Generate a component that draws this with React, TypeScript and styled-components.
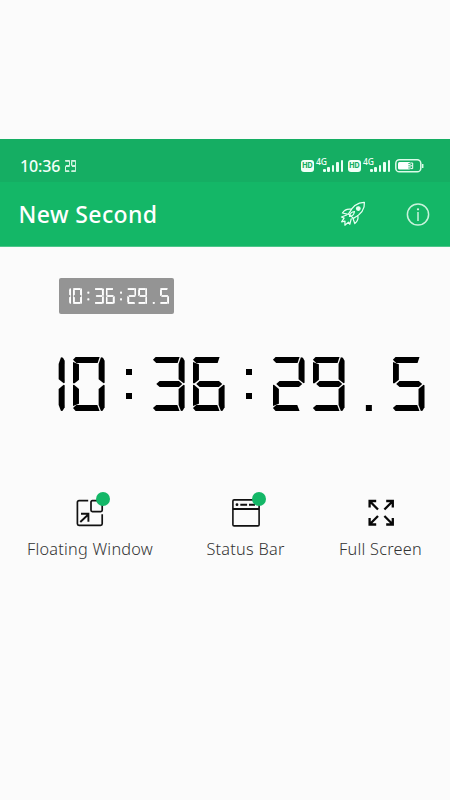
import React from "react";
import styled, { createGlobalStyle } from "styled-components";

const GlobalStyle = createGlobalStyle`
  * { box-sizing: border-box; }
  body { margin: 0; background: #fbfbfb; font-family: "Noto Sans", sans-serif; }
`;

const Page = styled.main`
  width: 450px;
  height: 800px;
  padding-top: 139px;
  background: #fbfbfb;
  overflow: hidden;
`;

const StatusBar = styled.div`
  height: 43px;
  padding: 10px 26px 0 20px;
  display: flex;
  justify-content: space-between;
  background: #15ae63;
  color: #f4fff9;
`;

const StatusGroup = styled.div<{ $gap: number }>`
  display: flex;
  align-items: center;
  gap: ${(p) => p.$gap}px;
  height: 34px;
`;

const Time = styled.span`
  width: 41px;
  font-size: 16px;
  font-weight: 500;
  line-height: 34px;
  letter-spacing: -0.15px;
  white-space: nowrap;
`;

const HdBadge = styled.span`
  width: 13px;
  height: 12px;
  border-radius: 3px;
  background: #f0fff7;
  color: #15ae63;
  font: 800 7px/12px Inter, sans-serif;
  text-align: center;
`;

const Signal = styled.div`
  display: flex;
  align-items: flex-start;
  width: 27px;
  height: 16px;
  margin: -2px 5px 0 2px;
`;

const Network = styled.span`
  width: 7px;
  font: 500 8.5px/9px "Noto Sans", sans-serif;
  white-space: nowrap;
`;

const Bars = styled.div`
  display: flex;
  align-items: flex-end;
  gap: 1.8px;
  height: 15px;
`;

const Bar = styled.i<{ $height: number }>`
  width: 2.6px;
  height: ${(p) => p.$height}px;
  border-radius: 1px;
  background: #e9fff3;
`;

const AppBar = styled.header`
  height: 65px;
  padding: 0 20px 0 18.5px;
  display: flex;
  align-items: center;
  background: #14b767;
  border-bottom: 1px solid #4cc68a;
  color: #fff;
`;

const Title = styled.h1`
  flex: 1;
  margin: 0;
  font-size: 23px;
  font-weight: 500;
  line-height: 32px;
  letter-spacing: 0.4px;
`;

const Actions = styled.div`
  display: flex;
  gap: 40px;
`;

const Preview = styled.section`
  width: 115px;
  height: 36px;
  margin: 31px 0 0 58.5px;
  display: flex;
  align-items: center;
  justify-content: flex-end;
  padding-right: 4.5px;
  border-radius: 2px;
  background: #949494;
`;

const Clock = styled.section`
  height: 54px;
  margin: 43px 0 0 33px;
`;

const Display = styled.div<{ $gap: number; $glow: number }>`
  display: flex;
  gap: ${(p) => p.$gap}px;
  filter: ${(p) => (p.$glow ? `drop-shadow(0 0 ${p.$glow}px rgba(255, 255, 255, 0.9))` : "none")};
`;

const Cell = styled.span<{ $width: number; $height: number; $color: string }>`
  display: grid;
  flex: none;
  width: ${(p) => p.$width}px;
  height: ${(p) => p.$height}px;
  color: ${(p) => p.$color};
`;

const Segment = styled.i<{ $shape: string }>`
  grid-area: 1 / 1;
  background: currentColor;
  clip-path: polygon(${(p) => p.$shape});
`;

/* Segment corners on a 95 x 162 cell. */
const segmentCorners: Record<string, number[][]> = {
  a: [[0, 8], [8, 0], [80, 0], [74, 18], [10, 18]],
  b: [[84, 1], [90, 2], [95, 11], [95, 77], [92, 79], [77, 67], [77, 21]],
  c: [[92, 83], [95, 85], [95, 151], [89, 161], [84, 162], [77, 144], [77, 96]],
  d: [[0, 153], [10, 144], [73, 144], [80, 162], [8, 162]],
  e: [[0, 84], [3, 83], [18, 96], [18, 140], [0, 147]],
  f: [[0, 15], [18, 22], [18, 68], [5, 79], [0, 79]],
  g: [[10, 81], [20, 72], [78, 72], [88, 81], [78, 90], [20, 90]],
  t: [[39, 36], [57, 36], [57, 54], [39, 54]],
  m: [[39, 108], [57, 108], [57, 126], [39, 126]],
  p: [[39, 144], [57, 144], [57, 162], [39, 162]],
};

const toPolygon = (corners: number[][]) =>
  corners.map(([x, y]) => `${(x / 95) * 100}% ${(y / 162) * 100}%`).join(", ");

const lit: Record<string, string> = {
  "0": "abcdef", "1": "bc", "2": "abged", "3": "abgcd", "4": "fgbc",
  "5": "afgcd", "6": "afgecd", "7": "abc", "8": "abcdefg", "9": "abfgcd",
  ":": "tm", ".": "p",
};

type SegmentDisplayProps = {
  value: string;
  width: number;
  height: number;
  gap: number;
  color: string;
  glow?: number;
};

function SegmentDisplay({ value, width, height, gap, color, glow = 0 }: SegmentDisplayProps) {
  return (
    <Display role="img" aria-label={value} $gap={gap} $glow={glow}>
      {[...value].map((char, i) => (
        <Cell key={i} $width={width} $height={height} $color={color}>
          {[...lit[char]].map((name) => (
            <Segment key={name} $shape={toPolygon(segmentCorners[name])} />
          ))}
        </Cell>
      ))}
    </Display>
  );
}

const Modes = styled.nav`
  display: flex;
  gap: 54px;
  margin: 81px 0 0 27px;
`;

const Mode = styled.div<{ $width: number }>`
  width: ${(p) => p.$width}px;
  display: flex;
  flex-direction: column;
  align-items: center;
`;

const ModeIcon = styled.div`
  position: relative;
  width: 28px;
  height: 36px;
  padding-top: 7px;
  svg { display: block; }
`;

const ActiveDot = styled.i`
  position: absolute;
  top: 0;
  left: 20px;
  width: 14px;
  height: 14px;
  border-radius: 50%;
  background: #14b767;
`;

const ModeLabel = styled.span`
  margin-top: 9px;
  font-size: 16.3px;
  font-weight: 300;
  line-height: 24px;
  letter-spacing: 0.24px;
  color: #333;
  white-space: nowrap;
`;

const SignalMeter = () => (
  <Signal>
    <Network>4G</Network>
    <Bars>
      {[3, 5, 7.5, 10, 12.5].map((h) => <Bar key={h} $height={h} />)}
    </Bars>
  </Signal>
);

const Battery = () => (
  <svg width="29" height="14" viewBox="0 0 29 14" fill="none">
    <rect x="0.8" y="0.8" width="25" height="12" rx="3.6" stroke="#dcfbe9" strokeWidth="1.5" />
    <rect x="3" y="3" width="12.5" height="7.6" rx="1.5" fill="#fff" />
    <path d="M27.7 5v4" stroke="#dcfbe9" strokeWidth="1.5" />
    <path d="M13.3 4.6h2.2M13.3 6.8h2.2M13.3 9h2.2" stroke="#15ae63" strokeWidth="0.9" />
    <path d="M15.5 4h2.2v5.6h-2.2M15.5 6.8h2" stroke="#fff" strokeWidth="1" />
  </svg>
);

const Rocket = () => (
  <svg width="26" height="26" viewBox="0 0 26 26" fill="none" stroke="#e8fff3" strokeWidth="1.25" strokeLinecap="round" strokeLinejoin="round">
    <path d="M24.4 1.4c-6.3-.2-11.5 3-15.8 11.5l4.8 4.5C21 13.5 25 8.5 24.4 1.4Z" />
    <circle cx="18.3" cy="7.6" r="1.8" fill="#e8fff3" />
    <path d="M11.4 8.2C8 7.6 4.4 8.6 2.4 12l5.9 1.3M17.8 14.7c.7 3-.4 5.8-3 7.8l-1.9-5.1" />
    <path d="M14.5 10.5c-3 .3-4.5 1.7-5 4.8 2.7.1 4.4-1.5 5-4.8Z" />
    <path d="m6.6 14-5.1 2 2.6 1.1-2.5 3.7 3.4-.7-.1 4.1 3.6-3.1 1.3 2.2 1.4-5.5" />
  </svg>
);

const Info = () => (
  <svg width="24" height="26" viewBox="0 0 24 26" fill="none" stroke="#c8f3dc">
    <circle cx="12" cy="13.5" r="10.6" strokeWidth="1.5" />
    <path d="M12 11v9" strokeWidth="1.5" />
    <circle cx="12" cy="8.3" r="1.1" fill="#d9f8e6" stroke="none" />
  </svg>
);

const FloatingIcon = () => (
  <svg width="28" height="28" viewBox="0 0 28 28" fill="none" stroke="#111" strokeWidth="1.7">
    <path d="M12.2 1.6H3a1.6 1.6 0 0 0-1.6 1.6v21.6A1.6 1.6 0 0 0 3 26.4h21.6a1.6 1.6 0 0 0 1.6-1.6v-9.6" />
    <rect x="15" y="1.6" width="11.2" height="11" rx="1.3" />
    <path d="M4.3 23 12 15.8M5 14.8h7.4v8" strokeWidth="1.9" />
  </svg>
);

const WindowIcon = () => (
  <svg width="28" height="28" viewBox="0 0 28 28" fill="none" stroke="#111" strokeWidth="1.6">
    <rect x="0.9" y="0.9" width="26.2" height="26" rx="1.2" />
    <path d="M1 10h26M8.3 5.7h6.8M17 5.7h6" strokeWidth="1.9" />
    <circle cx="5" cy="5.7" r="1.4" fill="#111" stroke="none" />
  </svg>
);

const ExpandIcon = () => (
  <svg width="28" height="28" viewBox="0 0 28 28" fill="none" stroke="#080808" strokeWidth="2.3">
    <path d="M11 10.5 2.8 2.3M2.6 8.6V2h6.6M17.4 10.5l8.2-8.2M19.2 2h6.6v6.6M11 17l-8.2 8.2M2.6 19v6.5h6.6M17.4 17l8.2 8.2M25.8 19v6.5h-6.6" />
  </svg>
);

const modes = [
  { label: "Floating Window", width: 126, active: true, Icon: FloatingIcon },
  { label: "Status Bar", width: 77, active: true, Icon: WindowIcon },
  { label: "Full Screen", width: 85, active: false, Icon: ExpandIcon },
];

export default function App() {
  const time = "10:36:29.5";
  return (
    <>
      <GlobalStyle />
      <Page>
        <StatusBar>
          <StatusGroup $gap={4}>
            <Time>10:36</Time>
            <SegmentDisplay value="29" width={5.2} height={11.5} gap={1} color="#d9f8e6" glow={0.4} />
          </StatusGroup>
          <StatusGroup $gap={0}>
            <HdBadge>HD</HdBadge>
            <SignalMeter />
            <HdBadge>HD</HdBadge>
            <SignalMeter />
            <Battery />
          </StatusGroup>
        </StatusBar>
        <AppBar>
          <Title>New Second</Title>
          <Actions>
            <Rocket />
            <Info />
          </Actions>
        </AppBar>
        <Preview>
          <SegmentDisplay value={time} width={8.9} height={15.6} gap={2} color="#fff" glow={0.5} />
        </Preview>
        <Clock>
          <SegmentDisplay value={time} width={31.67} height={54} gap={8.33} color="#000" />
        </Clock>
        <Modes>
          {modes.map(({ label, width, active, Icon }) => (
            <Mode key={label} $width={width}>
              <ModeIcon>
                <Icon />
                {active && <ActiveDot />}
              </ModeIcon>
              <ModeLabel>{label}</ModeLabel>
            </Mode>
          ))}
        </Modes>
      </Page>
    </>
  );
}
